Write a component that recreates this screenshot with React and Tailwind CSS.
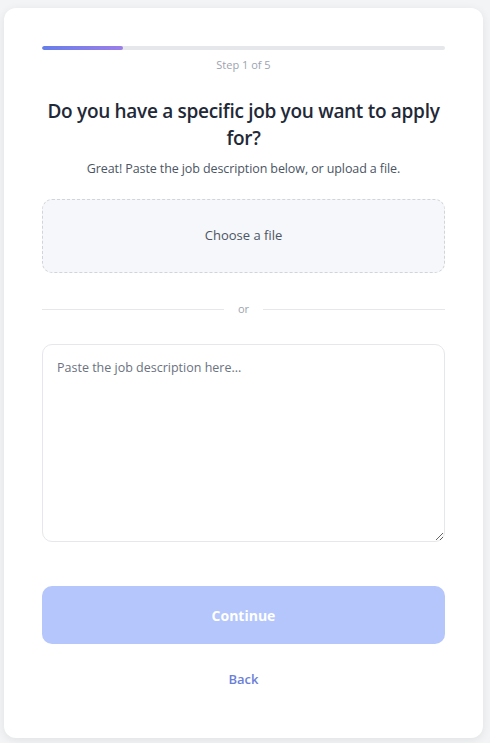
import React, { useState } from 'react';

const font = { fontFamily: '"Open Sans", "Noto Sans", sans-serif' };

const App = () => {
  const [text, setText] = useState('');

  return (
    <div className="min-h-[743px] bg-[#f3f4f6] pt-2 pl-1 pr-[7px] pb-[7px]" style={font}>
      <div className="bg-white rounded-[12px] shadow-[0_2px_10px_rgba(0,0,0,0.08)] px-[38px] pt-[38px] pb-[48px]">
        <div className="h-1 w-full rounded-full bg-[#e5e7eb] overflow-hidden">
          <div className="h-full w-[20%] rounded-full bg-gradient-to-r from-[#667eea] to-[#9b7ee8]" />
        </div>
        <p className="mt-[7px] text-center text-[11px] leading-4 text-[#9ca3af]">Step 1 of 5</p>

        <h1 className="mt-[25px] text-center text-[19px] leading-[27px] font-semibold tracking-[-0.3px] text-[#1f2937]">
          Do you have a specific job you want to apply for?
        </h1>
        <p className="mt-[7px] text-center text-[12.5px] leading-5 tracking-[-0.1px] text-[#4b5563]">
          Great! Paste the job description below, or upload a file.
        </p>

        <label className="mt-5 flex h-[74px] items-center justify-center rounded-[10px] border border-dashed border-[#d1d5db] bg-[#f5f7fa] cursor-pointer">
          <span className="text-[13px] font-medium text-[#4b5563]">Choose a file</span>
          <input type="file" className="hidden" />
        </label>

        <div className="mt-[28px] flex items-center gap-[14px]">
          <div className="h-px flex-1 bg-[#e5e7eb]" />
          <span className="text-[11px] leading-4 text-[#9ca3af]">or</span>
          <div className="h-px flex-1 bg-[#e5e7eb]" />
        </div>

        <textarea
          value={text}
          onChange={(e) => setText(e.target.value)}
          placeholder="Paste the job description here..."
          className="mt-[27px] block h-[198px] w-full rounded-[10px] border border-[#e5e7eb] px-[14px] py-[13px] text-[12.5px] leading-5 text-[#374151] placeholder:text-[#6b7280] focus:outline-none"
          style={font}
        />

        <button
          disabled={!text}
          className="mt-[44px] h-[58px] w-full rounded-[10px] bg-[#b4c6fc] text-[14px] font-bold text-white"
        >
          Continue
        </button>

        <div className="mt-[22px] text-center">
          <button className="text-[13px] font-semibold text-[#6b7fd7]">Back</button>
        </div>
      </div>
    </div>
  );
};

export default App;
